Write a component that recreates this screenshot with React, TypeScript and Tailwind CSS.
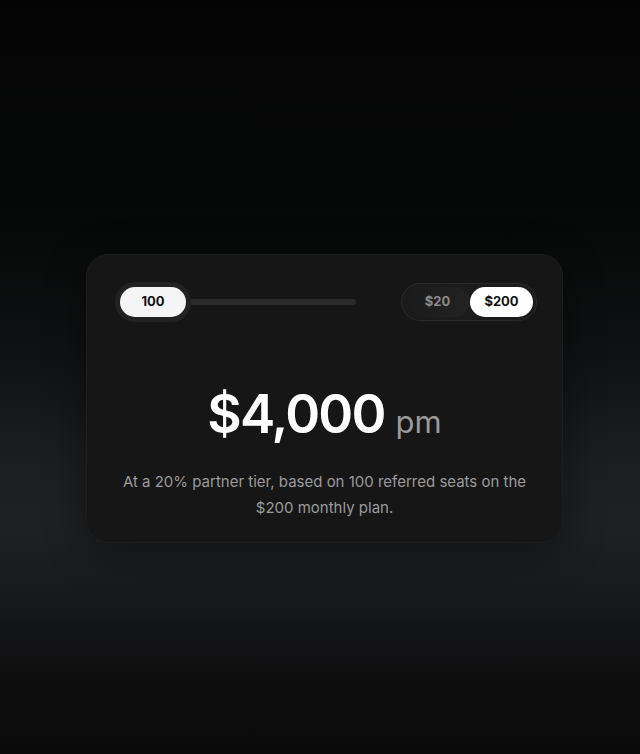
import React from "react";

export default function App() {
  return (
    <div
      className="w-full h-[754px] overflow-hidden bg-[linear-gradient(180deg,#040404_0%,#070808_30%,#101112_47%,#1c1e20_62%,#1e2022_70%,#17181a_80%,#0e0e0f_90%,#0a0a0a_100%)] pt-[254px]"
      style={{ fontFamily: "Inter, 'Noto Sans', sans-serif" }}
    >
      <div className="ml-[86px] w-[477px] h-[289px] rounded-[22px] bg-[#161616] border border-[#1e1e1e] shadow-[0_10px_40px_rgba(0,0,0,0.4)] pl-[28px] pr-[25px] pt-[27px] flex flex-col">
        <div className="flex items-center justify-between">
          <div className="relative w-[241px] h-[40px] flex items-center">
            <div className="absolute left-[10px] right-0 h-[6px] rounded-full bg-[#2b2b2b]" />
            <div className="relative rounded-full bg-[#222222] p-[5px]">
              <div className="w-[66px] h-[30px] rounded-full bg-[#f5f5f5] flex items-center justify-center text-[13px] font-bold text-[#111111]">
                100
              </div>
            </div>
          </div>
          <div className="w-[136px] h-[38px] rounded-full bg-[#1b1b1b] border border-[#2a2a2a] p-[3px] flex items-center">
            <div className="w-[66px] h-[30px] rounded-full flex items-center justify-center text-[13px] font-bold text-[#8a8a8a] bg-[linear-gradient(90deg,#1b1b1b,#222222)]">
              $20
            </div>
            <div className="w-[64px] h-[30px] rounded-full bg-white flex items-center justify-center text-[13px] font-bold text-[#111111]">
              $200
            </div>
          </div>
        </div>
        <div className="mt-[66px] flex items-baseline justify-center pr-[3px]">
          <span className="text-[53px] leading-none font-semibold text-white tracking-[-0.035em]">
            $4,000
          </span>
          <span className="ml-[11px] text-[31px] leading-none font-normal text-[#9a9a9a]">
            pm
          </span>
        </div>
        <p className="mt-[28px] pr-[3px] text-center text-[15px] leading-[26px] text-[#9b9b9b]">
          At a 20% partner tier, based on 100 referred seats on the
          <br />
          $200 monthly plan.
        </p>
      </div>
    </div>
  );
}
